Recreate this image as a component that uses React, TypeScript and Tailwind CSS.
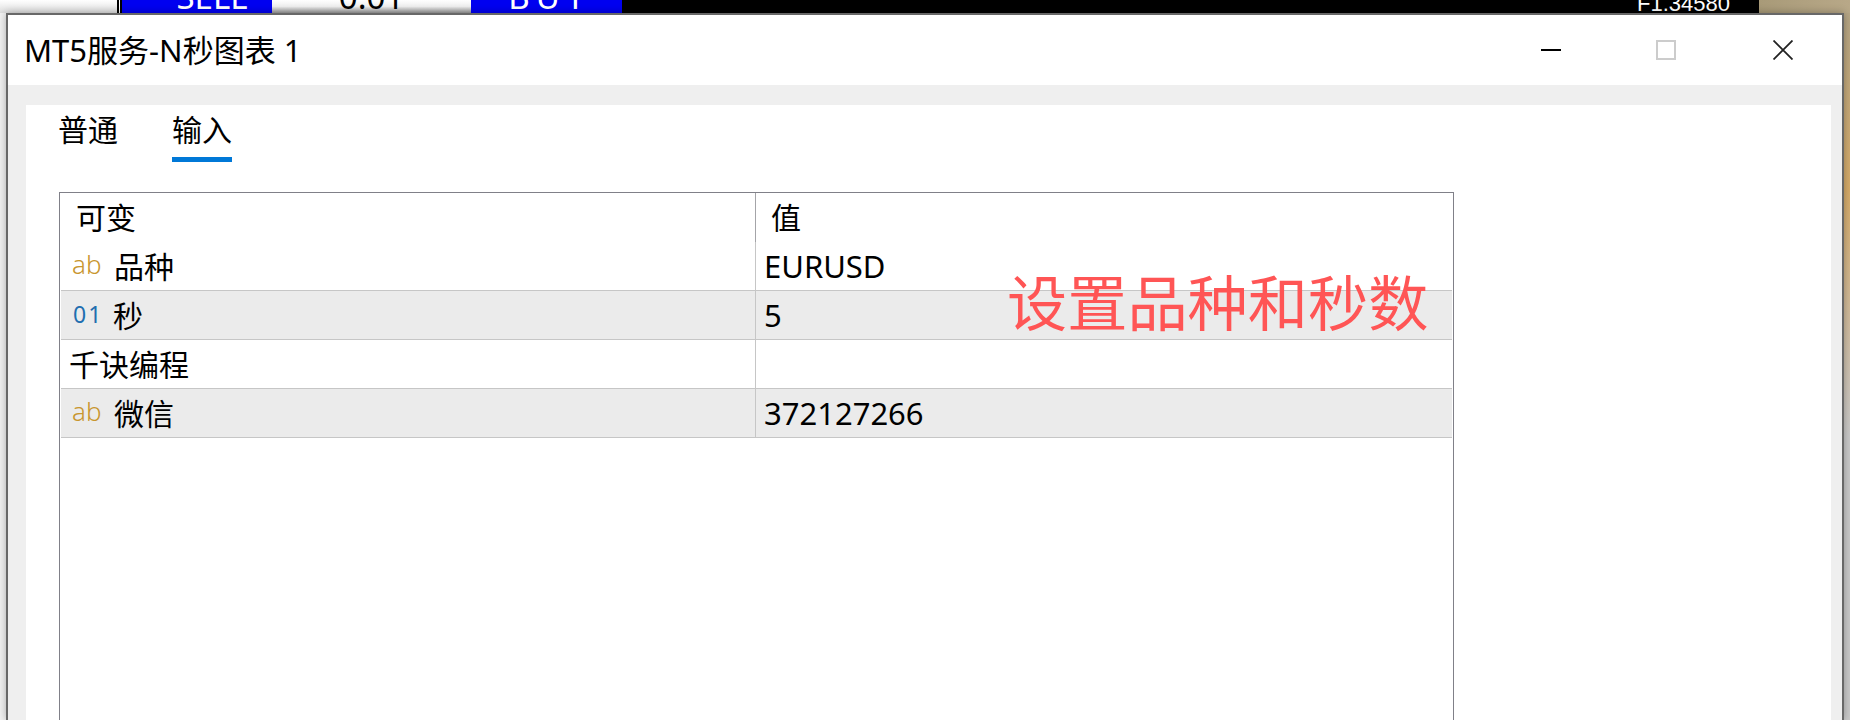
import React from "react";

const FONT = { fontFamily: '"Noto Sans", "Noto Sans CJK SC", sans-serif' };

function Row({ icon, name, value, shaded, nameClass }: { icon?: "ab" | "01"; name: string; value?: string; shaded?: boolean; nameClass?: string }) {
  return (
    <div className={`flex h-[49px] border-b border-[#c6c6c6] ${shaded ? "bg-[#ebebeb]" : "bg-white"}`}>
      <div className="flex w-[695px] items-center border-r border-[#c6c6c6] pt-[1px]">
        {icon === "ab" && <span className="ml-[11px] w-[42px] pb-[6px] text-[26px] font-light leading-none text-[#c8962f]">ab</span>}
        {icon === "01" && <span className="ml-[12px] w-[40px] pb-[3px] text-[23px] font-normal leading-none tracking-[2px] text-[#1f6fb0]">01</span>}
        <span className={`text-[30px] leading-none text-black ${nameClass ?? ""}`}>{name}</span>
      </div>
      <div className="flex flex-1 items-center pl-[8px] text-[31px] leading-none text-black">{value}</div>
    </div>
  );
}

export default function App() {
  return (
    <div lang="zh-CN" style={FONT} className="relative flex h-[720px] w-[1850px] flex-col overflow-hidden bg-[#f2f2f2]">
      <div className="flex h-[13px] shrink-0 items-end overflow-hidden">
        <div className="h-full w-[117px] bg-gradient-to-b from-white to-[#dddddd]" />
        <div className="h-full w-[5px] border-x-2 border-black bg-white" />
        <div className="flex h-full w-[150px] items-end justify-center overflow-hidden bg-[#0000f0] pb-[5px] pl-[30px] text-[33px] leading-[23px] text-white">SELL</div>
        <div className="flex h-full w-[199px] items-end justify-center overflow-hidden bg-gradient-to-b from-white via-[#eeeeee] to-[#999999] pb-[5px] text-[33px] leading-[23px] text-black">0.01</div>
        <div className="flex h-full w-[151px] items-end justify-center overflow-hidden bg-[#0000f0] pb-[5px] pl-[6px] text-[33px] leading-[23px] tracking-[6px] text-white">BUY</div>
        <div className="flex h-full w-[1137px] items-end overflow-hidden bg-black pb-[1px] pl-[1015px] text-[22px] font-light leading-[16px] text-white" style={{ fontFamily: '"Liberation Sans", sans-serif' }}>F1.34580</div>
        <div className="h-full flex-1 bg-gradient-to-r from-[#a89a78] to-[#b8a888]" />
      </div>

      <div className="absolute right-0 top-[13px] h-[707px] w-[6px] bg-gradient-to-b from-[#b5a585] via-[#d6ab68] via-25% to-[#c9c9c9] to-60%" />

      <div className="relative mx-[6px] flex min-h-0 flex-1 flex-col border-x-2 border-t-2 border-[#686868] bg-[#efefef] shadow-[0_0_8px_rgba(0,0,0,0.3)]">
        <div className="flex h-[70px] shrink-0 items-center bg-white">
          <span className="ml-[16px] text-[31px] leading-none text-black">MT5服务-N秒图表 1</span>
          <div className="ml-auto flex items-center">
            <svg width="20" height="20" viewBox="0 0 20 20" className="mr-[95px]"><rect x="0" y="9" width="20" height="2" fill="#000" /></svg>
            <svg width="20" height="20" viewBox="0 0 20 20" className="mr-[97px]"><rect x="1" y="1" width="18" height="18" fill="none" stroke="#cccccc" strokeWidth="2" /></svg>
            <svg width="20" height="20" viewBox="0 0 20 20" className="mr-[49px]"><path d="M0.5 0.5L19.5 19.5M19.5 0.5L0.5 19.5" stroke="#222" strokeWidth="1.8" fill="none" /></svg>
          </div>
        </div>

        <div className="ml-[18px] mr-[11px] mt-[20px] flex min-h-0 flex-1 flex-col bg-white">
          <div className="flex h-[57px] shrink-0 pl-[32px] text-[30px] leading-none text-black">
            <div className="flex items-start pt-[10px]">普通</div>
            <div className="ml-[54px] flex items-start border-b-[5px] border-[#0078d7] pt-[10px]">输入</div>
          </div>

          <div className="relative ml-[33px] mt-[30px] w-[1395px] flex-1 border-x border-t border-[#808088] px-[1px]">
            <div className="flex h-[49px]">
              <div className="flex w-[695px] items-center border-r border-[#a4a4a8] pl-[15px] text-[30px] leading-none text-black">可变</div>
              <div className="flex flex-1 items-center pl-[15px] text-[30px] leading-none text-black">值</div>
            </div>
            <Row icon="ab" name="品种" value="EURUSD" />
            <Row icon="01" name="秒" value="5" shaded />
            <Row name="千诀编程" nameClass="ml-[8px]" />
            <Row icon="ab" name="微信" value="372127266" shaded />
            <span className="absolute left-[947px] top-[80px] text-[60.2px] leading-none text-[#ff5555]">设置品种和秒数</span>
          </div>
        </div>
      </div>
    </div>
  );
}
